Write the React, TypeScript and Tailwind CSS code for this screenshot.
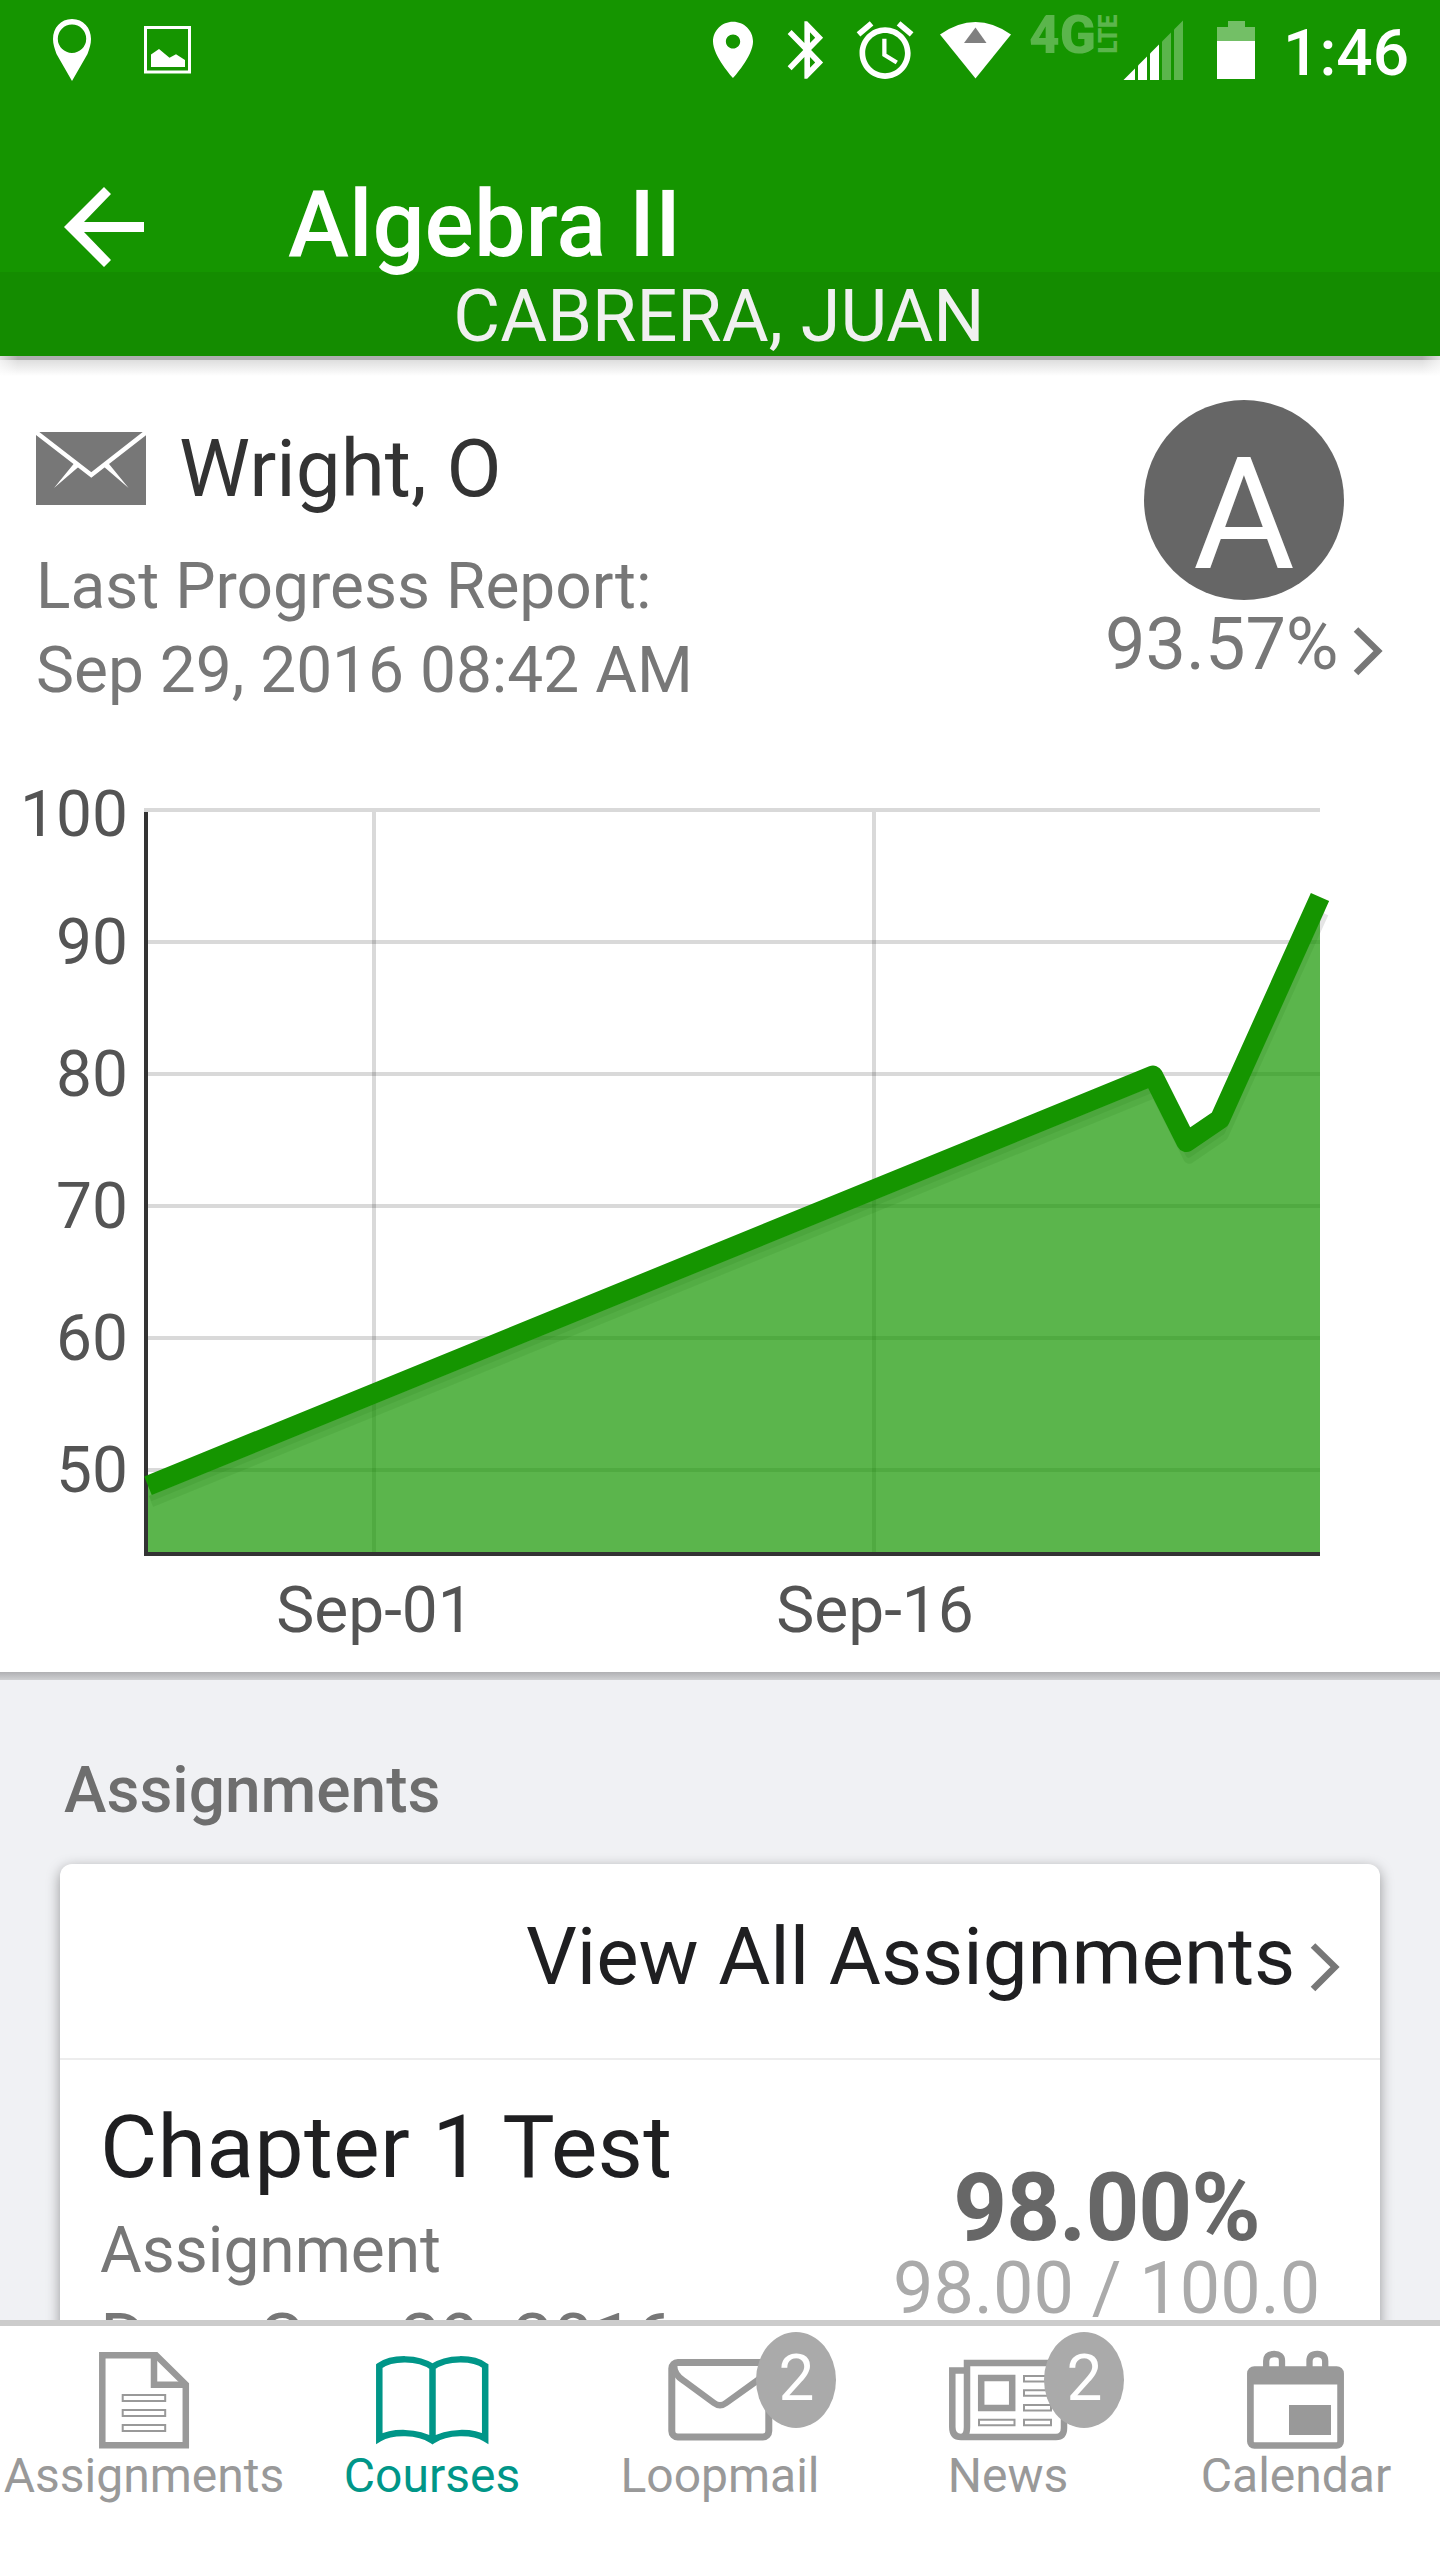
import type { ReactNode } from "react";

type Point = { x: number; y: number };

// plot area of the grade chart
const PLOT = { left: 148, right: 1320, top: 812, bottom: 1552 };

const gradeToY = (grade: number) => 810 + (100 - grade) * 13.2;

const gradeTicks = [100, 90, 80, 70, 60, 50];

const dateTicks = [
  { label: "Sep-01", x: 374 },
  { label: "Sep-16", x: 874 },
];

const gradeHistory: Point[] = [
  { x: 148, y: 1485.7 },
  { x: 1153, y: 1075.6 },
  { x: 1186.4, y: 1142 },
  { x: 1219.8, y: 1119.3 },
  { x: 1320, y: 897 },
];

const signalBars = [
  { from: 1123.5, to: 1135, on: true },
  { from: 1138, to: 1147, on: true },
  { from: 1150, to: 1159, on: true },
  { from: 1162, to: 1171, on: false },
  { from: 1174, to: 1183, on: false },
];

function StatusBar() {
  return (
    <div className="flex h-[96px] text-white">
      <svg viewBox="0 0 200 96" className="h-[96px] w-[200px]" fill="currentColor">
        <path
          fillRule="evenodd"
          d="M72 19C60.500 19 53 28 53 39c0 5 1.500 9.500 3.500 15L72 81l15.500-27C89.500 48.500 91 44 91 39c0-11-7.500-20-19-20zm0 5.500a14.200 14.200 0 1 1 0 28.400a14.200 14.200 0 0 1 0-28.400z"
        />
        <rect x="145.500" y="27.500" width="44" height="44.500" fill="none" stroke="currentColor" strokeWidth="3" />
        <path d="M151 54.500l8-5.500 10.500 8.700 6.500-3.400 9 5.700v7h-34z" />
      </svg>
      <svg viewBox="200 0 1080 96" className="h-[96px] w-[1080px]" fill="currentColor">
        <path
          transform="translate(698.700 16.200) scale(2.860 2.810)"
          d="M12 2C8.130 2 5 5.130 5 9c0 5.250 7 13 7 13s7-7.750 7-13c0-3.870-3.130-7-7-7zm0 9.500c-1.380 0-2.500-1.120-2.500-2.500s1.120-2.500 2.500-2.500 2.500 1.120 2.500 2.500-1.120 2.500-2.500 2.500z"
        />
        <path
          transform="translate(773.700 15.500) scale(2.790 2.880)"
          d="M17.710 7.710L12 2h-1v7.590L6.410 5 5 6.410 10.590 12 5 17.590 6.410 19 11 14.410V22h1l5.710-5.710-4.300-4.290 4.300-4.290zM13 5.830l1.880 1.880L13 9.590V5.830zm1.880 10.460L13 18.170v-3.760l1.880 1.880z"
        />
        <path
          transform="translate(851 15.800) scale(2.840 2.870)"
          d="M22 5.720l-4.600-3.860-1.290 1.530 4.600 3.860L22 5.720zM7.880 3.390L6.600 1.860 2 5.710l1.290 1.530 4.590-3.850zM12.500 8H11v6l4.750 2.850.75-1.230-4-2.370V8zM12 4c-4.970 0-9 4.030-9 9s4.020 9 9 9c4.970 0 9-4.030 9-9s-4.030-9-9-9zm0 16c-3.870 0-7-3.130-7-7s3.130-7 7-7 7 3.130 7 7-3.130 7-7 7z"
        />
        <path d="M940 34.500Q975.500 9.500 1011 34.500L975.500 78.500z" />
        <path d="M964 43L975.500 27.500L986.500 43z" fill="#808080" />
        <g fill="#5bb54c" className="font-['Roboto'] font-black">
          <text x="1029" y="53" fontSize="53" textLength="67" lengthAdjust="spacingAndGlyphs">4G</text>
          <text transform="translate(1117 53.500) rotate(-90)" fontSize="26" textLength="39" lengthAdjust="spacingAndGlyphs">
            LTE
          </text>
        </g>
        {signalBars.map(({ from, to, on }) => (
          <path
            key={from}
            d={`M${from} 80V${1203.5 - from}L${to} ${1203.5 - to}V80z`}
            fill={on ? "#ffffff" : "#5bb54c"}
          />
        ))}
        <path d="M1217 41V27h11v-6h17v6h10v14z" fill="#73bf66" />
        <path d="M1217 41h38v38h-38z" />
      </svg>
      <span className="mt-[21px] ml-[3px] text-[64px] leading-[65px] font-medium">1:46</span>
    </div>
  );
}

function Header() {
  return (
    <header className="bg-[#159500]">
      <StatusBar />
      <div className="flex h-[176px]">
        <svg viewBox="0 96 288 176" className="h-[176px] w-[288px]" fill="#ffffff">
          <path d="M104 187l7 7-27 28h60v10H84l27 28-7 7-40-40z" />
        </svg>
        <h1 className="pt-[82px] text-[92px] leading-[93px] font-medium whitespace-nowrap text-white">
          Algebra II
        </h1>
      </div>
      <div className="h-[84px] bg-[#148c00] pr-[2px] text-center text-[72px] leading-[89px] text-[#f0f0f0]">
        CABRERA, JUAN
      </div>
    </header>
  );
}

function Chevron() {
  return (
    <svg
      viewBox="0 0 36 72"
      className="h-[72px] w-[36px] shrink-0"
      fill="none"
      stroke="#777777"
      strokeWidth="6.500"
    >
      <path d="M7 21.500L29 43L7 65" />
    </svg>
  );
}

function CourseSummary() {
  return (
    <div className="flex h-[404px] justify-between">
      <div className="pt-[76px] pl-[36px]">
        <div className="flex h-[73px] gap-[33px]">
          <svg viewBox="36 432 110 73" className="h-[73px] w-[110px]">
            <path d="M36 432h110v73H36z" fill="#777777" />
            <path d="M35 431.500L91.300 475L147 431.500" fill="none" stroke="#ffffff" strokeWidth="4.500" />
            <path d="M74 463.500l5 3L54 488zM108.600 463.500l-5 3L128.600 488z" fill="#ffffff" />
          </svg>
          <h2 className="text-[80px] leading-[74px] text-[#333333]">Wright, O</h2>
        </div>
        <p className="mt-[40px] text-[64px] leading-[84px] text-[#777777]">
          Last Progress Report:
          <br />
          Sep 29, 2016 08:42 AM
        </p>
      </div>
      <div className="w-[335px] pt-[44px]">
        <div className="ml-[39px] h-[200px] w-[200px] rounded-full bg-[#666666] pt-[14px] text-center text-[156px] leading-[201px] text-white">
          A
        </div>
        <div className="mt-[8px] flex text-[#777777]">
          <span className="w-[244px] text-[72px] leading-[73px]">93.57%</span>
          <Chevron />
        </div>
      </div>
    </div>
  );
}

function GradeChart() {
  const points = gradeHistory.map(({ x, y }) => `${x} ${y}`).join("L");
  return (
    <svg viewBox="0 760 1440 912" className="block h-[912px] w-[1440px]">
      <g fill="#000000" fillOpacity="0.150">
        {gradeTicks.map((grade) => (
          <rect key={grade} x={PLOT.left} y={gradeToY(grade) - 2} width={PLOT.right - PLOT.left} height="4" />
        ))}
        {dateTicks.map(({ label, x }) => (
          <rect key={label} x={x - 2} y={PLOT.top} width="4" height={PLOT.bottom - PLOT.top} />
        ))}
        <rect x="144" y="808" width="4" height="4" />
      </g>
      <path d="M146 812V1554H1320" fill="none" stroke="#333333" strokeWidth="4" />
      <g fill="none" stroke="#000000" strokeOpacity="0.100" strokeLinejoin="round">
        <path d={`M${points}`} strokeWidth="12" transform="translate(2.800 15.800)" />
        <path d={`M${points}`} strokeWidth="6" transform="translate(2.300 12.800)" />
      </g>
      <path
        d={`M${PLOT.left} ${PLOT.bottom}L${points}L${PLOT.right} ${PLOT.bottom}z`}
        fill="#159500"
        fillOpacity="0.700"
      />
      <path d={`M${points}`} fill="none" stroke="#159500" strokeWidth="20" strokeLinejoin="round" />
      <g fill="#545454" fontSize="64">
        {gradeTicks.map((grade) => (
          <text key={grade} x="128" y={grade === 100 ? 836 : gradeToY(grade) + 21.5} textAnchor="end">
            {grade}
          </text>
        ))}
        {dateTicks.map(({ label, x }) => (
          <text key={label} x={x + 1} y="1632" textAnchor="middle">
            {label}
          </text>
        ))}
      </g>
    </svg>
  );
}

function AssignmentsCard() {
  return (
    <section className="mx-[60px] mt-[41px] h-[600px] rounded-[12px] bg-white shadow-[0_4px_14px_rgba(0,0,0,0.38)]">
      <div className="flex h-[196px] border-b-2 border-[#ededed] pt-[53px] pl-[466px]">
        <span className="w-[780px] text-[80px] leading-[81px] tracking-[-0.1px] whitespace-nowrap text-[#1f1f21]">
          View All Assignments
        </span>
        <div className="pt-[7px]">
          <Chevron />
        </div>
      </div>
      <div className="flex">
        <div className="w-[833px] pl-[40px] text-[#777777]">
          <h3 className="pt-[42px] text-[88px] leading-[89px] tracking-[0.25px] text-[#1f1f21]">Chapter 1 Test</h3>
          <p className="mt-[17px] text-[64px] leading-[85px]">Assignment</p>
          <p className="mt-[5px] text-[72px] leading-[85px]">Due: Sep 29, 2016</p>
        </div>
        <div className="w-[427px] pt-[103px] text-center">
          <p className="text-[94px] leading-[90px] font-bold tracking-[-1px] text-[#676767]">98.00%</p>
          <p className="text-[72px] leading-[71px] whitespace-nowrap text-[#aaaaaa]">98.00 / 100.0</p>
        </div>
      </div>
    </section>
  );
}

type NavItem = {
  label: string;
  left: number;
  icon: ReactNode;
  active?: boolean;
  badge?: number;
};

const navItems: NavItem[] = [
  {
    label: "Assignments",
    left: 0,
    icon: (
      <>
        <path d="M102.300 2355.200H156L185.800 2384.500V2445.300H102.300z" strokeWidth="6.500" />
        <path d="M154 2356V2384.700H186" strokeWidth="6.500" />
        <path d="M122.700 2395h42.500v6h-42.500zM122.700 2410h42.500v6h-42.500zM122.700 2425h42.500v6h-42.500z" strokeWidth="2" />
      </>
    ),
  },
  {
    label: "Courses",
    left: 288,
    active: true,
    icon: (
      <path
        d="M379.300 2366C392 2357 418 2357 432.500 2367C447 2357 473 2357 485.200 2366V2438.500C473 2431 447 2431 432.500 2440.500C418 2431 392 2431 379.300 2438.500zM432.500 2367V2440"
        strokeWidth="6.500"
      />
    ),
  },
  {
    label: "Loopmail",
    left: 576,
    badge: 2,
    icon: (
      <>
        <rect x="671.800" y="2362.500" width="97" height="74.500" rx="6" strokeWidth="7" />
        <path d="M674 2365C674 2374 679 2378 684 2381L714 2403Q720 2407.500 726 2403L758 2380Q766 2374 766 2365" strokeWidth="6.500" />
      </>
    ),
  },
  {
    label: "News",
    left: 864,
    badge: 2,
    icon: (
      <>
        <path
          d="M964 2370.500H952.300V2427Q952.300 2437 961 2437H1056Q1064 2437 1064 2428V2363H967V2427Q967 2437 961 2437"
          strokeWidth="6.500"
        />
        <path d="M981.200 2378h31v30h-31z" strokeWidth="6.500" />
        <path
          d="M979 2419.700h35.500v5.500h-35.500zM1024 2376h27v5.500h-27zM1024 2390.300h27v5.500h-27zM1024 2405h27v5.500h-27zM1024 2419.700h27v5.500h-27z"
          strokeWidth="2"
        />
      </>
    ),
  },
  {
    label: "Calendar",
    left: 1152,
    icon: (
      <>
        <rect x="1250.400" y="2369.500" width="90.200" height="76" rx="4" strokeWidth="6.700" />
        <path d="M1250 2369h91v15.500h-91z" fill="currentColor" stroke="none" />
        <path d="M1289 2405h42v30h-42z" fill="currentColor" stroke="none" />
        <path d="M1266.200 2368V2361Q1266.200 2354 1274.200 2354T1282 2361V2368M1309.500 2368V2361Q1309.500 2354 1317.300 2354T1325.200 2361V2368" strokeWidth="6.300" />
      </>
    ),
  },
];

function BottomNav() {
  return (
    <nav className="flex h-[240px] border-t-6 border-[#cccccc] bg-white">
      {navItems.map(({ label, left, icon, active, badge }) => (
        <div key={label} className={`relative w-[288px] text-center ${active ? "text-[#009688]" : "text-[#999999]"}`}>
          <svg viewBox={`${left} 2326 288 130`} className="block h-[130px] w-[288px]" fill="none" stroke="currentColor">
            {icon}
          </svg>
          <div className="text-[48px] leading-[39px]">{label}</div>
          {badge && (
            <span className="absolute top-[6px] left-[180px] h-[96px] w-[80px] rounded-[50%] bg-[#aaaaaa] pl-[1px] text-[64px] leading-[94px] text-white">
              {badge}
            </span>
          )}
        </div>
      ))}
    </nav>
  );
}

export default function App() {
  return (
    <div className="h-[2560px] w-[1440px] overflow-hidden bg-[#f0f1f4] font-['Roboto',sans-serif]">
      <div className="h-[2320px] overflow-hidden">
        <Header />
        <main>
          <section className="relative bg-white">
            <div className="absolute inset-x-0 top-0">
              <div className="h-[4px] bg-[#afafaf]" />
              <div className="h-[16px] bg-linear-to-b from-[#dedede] to-white" />
              <div className="absolute top-0 left-0 h-[20px] w-[18px] bg-linear-to-r from-white/60 to-white/0" />
              <div className="absolute top-0 right-0 h-[20px] w-[18px] bg-linear-to-l from-white/60 to-white/0" />
            </div>
            <CourseSummary />
            <GradeChart />
          </section>
          <div className="h-[8px] bg-linear-to-b from-[#b0b0b3] to-[#cfd0d2]" />
          <h2 className="mt-[78px] ml-[64px] text-[64px] leading-[65px] font-medium text-[#6e6e6e]">Assignments</h2>
          <AssignmentsCard />
        </main>
      </div>
      <BottomNav />
    </div>
  );
}
